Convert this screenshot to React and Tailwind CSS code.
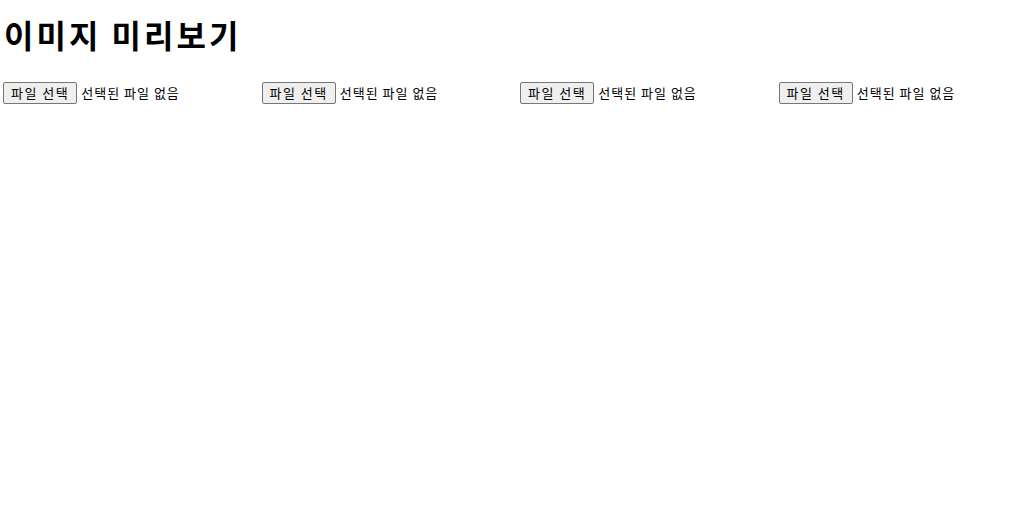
export default function App() {
  const cols = [0, 1, 2, 3];
  return (
    <div className="w-[1034px] h-[514px] bg-white text-black">
      <h1 className="mt-[14px] h-[40px] leading-[40px] pl-[4px] text-[32px] tracking-[3px] font-bold font-['Noto_Sans_CJK_KR',sans-serif]">
        이미지 미리보기
      </h1>
      <div className="mt-[28px] flex">
        {cols.map((i) => (
          <div key={i} className="w-1/4 pl-[3px] flex items-center font-['Noto_Sans_CJK_KR',sans-serif] text-[13px]">
            <button className="h-[22px] px-[7px] border border-[#767676] rounded-[2px] bg-[#efefef] leading-[20px] tracking-[1.5px] text-black whitespace-nowrap">
              파일 선택
            </button>
            <span className="ml-[4px] tracking-[1px] leading-[22px] whitespace-nowrap">선택된 파일 없음</span>
          </div>
        ))}
      </div>
    </div>
  );
}
